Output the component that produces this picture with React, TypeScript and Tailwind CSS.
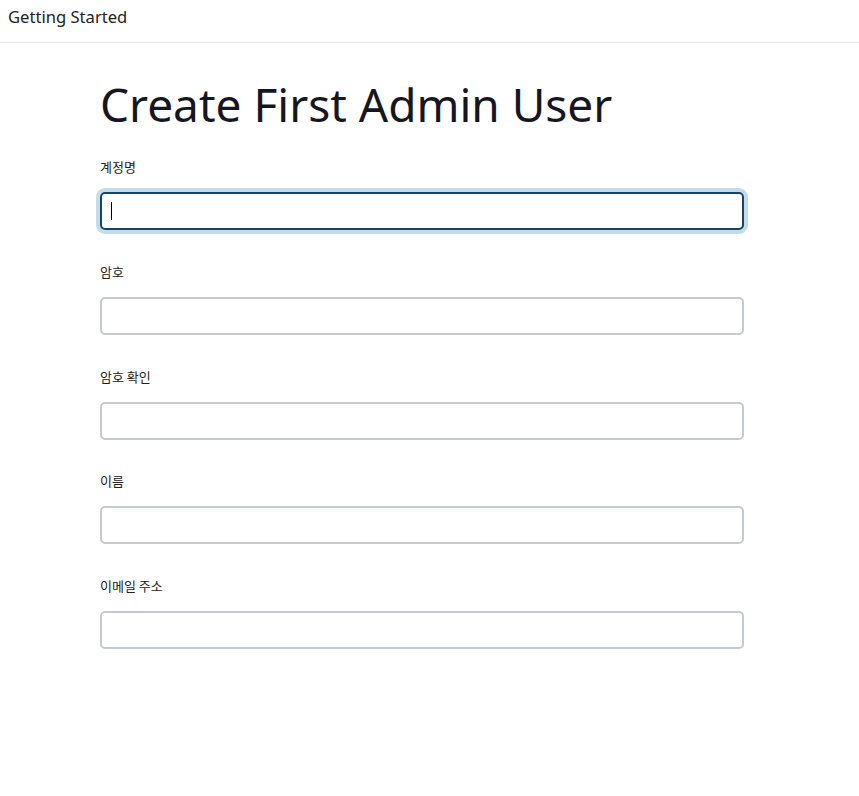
const fields = ['계정명', '암호', '암호 확인', '이름', '이메일 주소'];

export default function App() {
  return (
    <div
      className="min-h-screen bg-white text-[#1b1b22]"
      style={{ fontFamily: '"Noto Sans", "Noto Sans CJK KR", sans-serif' }}
    >
      <div className="h-[43px] border-b border-[#e6e6e6] px-2 pt-[5px]">
        <span className="text-[16.6px] text-[#222]">Getting Started</span>
      </div>

      <div className="ml-[100px] w-[644px] pt-[31px]">
        <h1 className="text-[46px] leading-[60px] font-normal text-[#161622]">
          Create First Admin User
        </h1>

        <div className="mt-[24px] flex flex-col gap-[32.75px]">
          {fields.map((label, i) => (
            <div key={label}>
              <div className="text-[13px] leading-[18px] text-[#222] mb-[16px]" style={{ fontFamily: '"Noto Sans CJK KR", sans-serif' }}>
                {label}
              </div>
              {i === 0 ? (
                <div className="h-[38px] rounded-[5px] border-2 border-[#134566] ring-4 ring-[#c6dbe9] flex items-center pl-[9px]">
                  <div className="w-px h-[18px] bg-black" />
                </div>
              ) : (
                <input
                  type={i < 3 ? 'password' : 'text'}
                  className="block w-full h-[38px] rounded-[5px] border-2 border-[#c4cbd0] px-2 outline-none"
                />
              )}
            </div>
          ))}
        </div>
      </div>
    </div>
  );
}
